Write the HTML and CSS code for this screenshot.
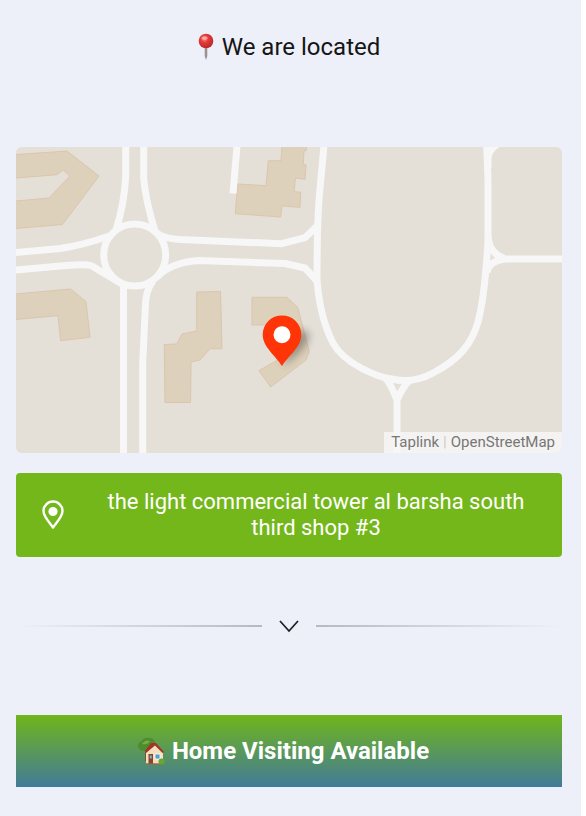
FILE: index.html
```html
<!DOCTYPE html>
<html lang="en">
<head>
<meta charset="utf-8">
<meta name="viewport" content="width=device-width, initial-scale=1">
<title>We are located</title>
<link rel="stylesheet" href="styles.css">
</head>
<body>
<main class="page">
  <h1 class="title">
    <svg class="pushpin" viewBox="0 0 16 28" aria-hidden="true">
      <defs>
        <radialGradient id="pinHead" cx=".4" cy=".35" r=".65">
          <stop offset="0" stop-color="#ff8d80"/>
          <stop offset=".4" stop-color="#e53c39"/>
          <stop offset="1" stop-color="#b9272b"/>
        </radialGradient>
      </defs>
      <path d="M6.700 13h2.600v10L8 27l-1.300-4z" fill="#9b918f"/>
      <circle cx="8" cy="8" r="7.300" fill="url(#pinHead)"/>
      <ellipse cx="6.500" cy="5" rx="3" ry="1.800" fill="#ffc1b8" opacity=".65"/>
    </svg>
    <span>We are located</span>
  </h1>

  <section class="map" aria-label="Map">
    <svg class="map-canvas" viewBox="16 147 546 306" preserveAspectRatio="xMidYMid slice" aria-hidden="true">
      <defs>
        <filter id="soft" x="-50%" y="-50%" width="200%" height="200%"><feGaussianBlur stdDeviation="4"/></filter>
      </defs>
      <g class="buildings">
        <path d="M10 155L67 151L99 176L62.500 224.500L10 229V201.500L49 198L70 176L63 170L57 174.700L10 178.500z"/>
        <path d="M237.700 184L266 185.700L268.300 160.700H281L282 145H306.700L306 150.700H304L303.300 164L306 165L305 179.300L295.300 178L294.300 191.700L300.700 192.300L300 207.300L281.700 206L280.700 217L235.300 213.700z"/>
        <path d="M10 294.500L70.700 289L86 301.700L90 337.300L60.700 340.700L58 315.700L10 320z"/>
        <path d="M196.700 292L220.500 291.500L222 348.700H210L200 360L191 362L190.500 402.500H165L164.300 344.500L176.700 344L182 334L196.700 331z"/>
        <path d="M252 297.300H286.700L297.700 307.300L309.300 351.700L306 360L270.700 387L259 370.700L281 358L282 325H252z"/>
      </g>
      <g class="roads">
        <circle cx="134.700" cy="255" r="31"/>
        <path d="M125.700 140V176Q124.500 203 116 230"/>
        <path d="M143.700 140V179Q146 202 155 231Q160 238 180 239.500L281.700 243.700L305 237.700L318 225"/>
        <path d="M10 253L60 248.500Q84 245 109 236"/>
        <path d="M10 270.500L66 265.500Q86 264 92 266L122 284"/>
        <path d="M123.500 283V460"/>
        <path d="M153 281Q146 290 145.500 304L142.700 363V460"/>
        <path d="M157 277Q170 263 198 260.500L285 263.500L305 268L318 282"/>
        <path d="M237.500 140L233 193.500"/>
        <path d="M324.500 140L319.500 194Q317 222 317 280Q320 318 333 343C345 365 379 377 391 379Q413 384 433 373C460 359 472 343 478 322C483 303 486 276 488 240V180L486.500 140"/>
        <path d="M488 168V158Q489 149 498 144"/>
        <path d="M488 236Q489 254 506 259H570M487 273Q488 261 506 259"/>
        <path d="M385 378Q390 382 397 400V460M410 380Q403 386 397 400"/>
      </g>
      <path d="M282 366L291 336Q304 326 309 334Q309 348 282 366z" fill="#000" opacity=".32" filter="url(#soft)"/>
      <path d="M282 366C276 356 262.700 347 262.700 334.700a19.300 19.300 0 0 1 38.600 0C301.300 347 288 356 282 366z" fill="#ff3508"/>
      <circle cx="282" cy="334.700" r="8.500" fill="#fff"/>
    </svg>
    <div class="credits"><a href="#">Taplink</a><span class="bar">|</span><a href="#">OpenStreetMap</a></div>
  </section>

  <a class="address" href="#">
    <svg class="address-icon" viewBox="0 0 24 30" aria-hidden="true">
      <path d="M12 27.500C9.500 23.500 2.500 17 2.500 11a9.500 9.500 0 0 1 19 0c0 6-7 12.500-9.500 16.500z" fill="none" stroke="#fff" stroke-width="2.400" stroke-linejoin="round"/>
      <circle cx="12" cy="11.500" r="4.600" fill="#fff"/>
    </svg>
    <span class="address-text">the light commercial tower al barsha south third shop #3</span>
  </a>

  <div class="divider">
    <span class="line"></span>
    <svg class="chevron" viewBox="0 0 22 14" aria-hidden="true"><path d="M2 2l9 10 9-10" fill="none" stroke="#222" stroke-width="1.800"/></svg>
    <span class="line line-right"></span>
  </div>

  <h2 class="banner">
    <svg class="house" viewBox="0 0 28 28" aria-hidden="true">
      <path d="M8 12h3v12H8z" fill="#79533a"/>
      <path d="M1 9Q1 5 5 4Q7 0 12 1Q17 1 18 5Q20 9 16 12Q12 17 7 14Q2 14 1 9z" fill="#4e8d2d"/>
      <path d="M5 7Q8 2 13 4Q11 8 5 7z" fill="#75ad40"/>
      <path d="M9 14l6-7h4l7 8v12H9z" fill="#f4dfba"/>
      <path d="M8 14L14 6h5l8 9-1.500 1L18 8.500 9 16z" fill="#a5312c"/>
      <path d="M11.500 17h4.500v10h-4.500z" fill="#85452f"/>
      <path d="M12.800 18.500h2v3h-2z" fill="#78b5d9"/>
      <path d="M18 17h5v5h-5z" fill="#599fcd" stroke="#fff" stroke-width=".8"/>
      <path d="M9 26.300h17v1.200H9z" fill="#9b6349"/>
      <circle cx="24.500" cy="24.500" r="3" fill="#67a635"/>
    </svg>
    <span>Home Visiting Available</span>
  </h2>
</main>
</body>
</html>
```
FILE: styles.css
```css
* {
  box-sizing: border-box;
}

body {
  margin: 0;
  background: #fff;
  font-family: Roboto, "Liberation Sans", sans-serif;
}

.page {
  min-height: 100vh;
  margin-right: 5px;
  padding: 32px 19px 28px 16px;
  background: #edf0f9;
}

.title {
  display: flex;
  justify-content: center;
  align-items: center;
  gap: 8px;
  margin: 0 0 85px;
  color: #151515;
  font-size: 24px;
  font-weight: 400;
  line-height: 30px;
}

.pushpin {
  width: 16px;
  height: 28px;
}

.map {
  position: relative;
  overflow: hidden;
  border-radius: 6px;
  background: #e4dfd7;
}

.map-canvas {
  display: block;
  width: 100%;
}

.buildings {
  fill: #ddd1bb;
  stroke: #dcc5ae;
  stroke-width: 1;
}

.roads {
  fill: none;
  stroke: #f7f7f7;
  stroke-width: 7;
  stroke-linejoin: round;
}

.credits {
  position: absolute;
  right: 0;
  bottom: 0;
  display: flex;
  gap: 4px;
  padding: 0 7px;
  background: rgba(247, 247, 246, 0.85);
  font-size: 15px;
  line-height: 21px;
}

.credits a {
  color: #777;
  text-decoration: none;
}

.bar {
  color: #ccc;
}

.address {
  display: flex;
  align-items: center;
  margin-top: 20px;
  padding: 16px 24px;
  border-radius: 4px;
  background: #74b71b;
  color: #fff;
  font-size: 22px;
  line-height: 26px;
  text-align: center;
  text-decoration: none;
}

.address-icon {
  flex: none;
  width: 26px;
  height: 30px;
}

.address-text {
  flex: 1;
  padding: 0 12px 0 40px;
}

.divider {
  display: flex;
  align-items: center;
  gap: 16px;
  margin: 62px 0 82px;
}

.line {
  flex: 1;
  height: 2px;
  background: linear-gradient(to right, rgba(174, 176, 183, 0), #b7b9c0);
}

.line-right {
  background: linear-gradient(to left, rgba(174, 176, 183, 0), #b7b9c0);
}

.chevron {
  width: 22px;
  height: 14px;
}

.banner {
  display: flex;
  justify-content: center;
  align-items: center;
  gap: 7px;
  margin: 0;
  padding: 21px 20px 21px 8px;
  background: linear-gradient(#70b51b, #427b98);
  color: #fff;
  font-size: 24px;
  font-weight: 700;
  line-height: 30px;
}

.house {
  width: 28px;
  height: 28px;
}
```
